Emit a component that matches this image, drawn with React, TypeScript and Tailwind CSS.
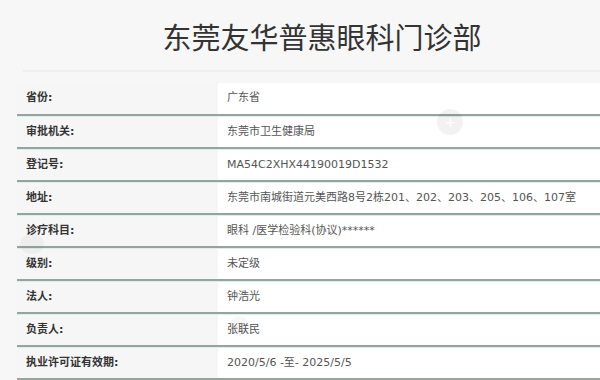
import React from "react";

const rows: [string, string][] = [
  ["省份:", "广东省"],
  ["审批机关:", "东莞市卫生健康局"],
  ["登记号:", "MA54C2XHX44190019D1532"],
  ["地址:", "东莞市南城街道元美西路8号2栋201、202、203、205、106、107室"],
  ["诊疗科目:", "眼科 /医学检验科(协议)******"],
  ["级别:", "未定级"],
  ["法人:", "钟浩光"],
  ["负责人:", "张联民"],
  ["执业许可证有效期:", "2020/5/6 -至- 2025/5/5"],
];

const font = {
  fontFamily: '"DejaVu Sans", "Noto Sans CJK SC", sans-serif',
};

export default function App() {
  return (
    <div
      className="relative w-[600px] h-[380px] overflow-hidden bg-[#f7f7f7]"
      style={font}
    >
      <div className="ml-[17px] w-[610px]">
        <h1
          className="h-[70px] pt-[14px] text-center text-[29px] leading-[44px] text-[#333] pl-[0px]"
          style={{ fontFamily: '"Noto Sans CJK SC", sans-serif' }}
        >
          东莞友华普惠眼科门诊部
        </h1>
        <div className="ml-[6px] h-[2px] bg-[#efefef]" />
        <div className="h-[11px]" />
        <div className="flex flex-col">
          {rows.map(([k, v], i) => (
            <div
              key={i}
              className={`flex h-[33px] border-b-2 border-[#93a69e] ${
                i === 0 ? "" : "border-t border-t-[#ddefe8]"
              }`}
            >
              <div className="w-[201px] flex items-center pl-[9px] bg-[#f6f6f6] text-[11px] font-semibold text-[#333]">
                {k}
              </div>
              <div className="flex-1 flex items-center pl-[9px] bg-white text-[11px] text-[#555]">
                {v}
              </div>
            </div>
          ))}
        </div>
      </div>
      <div className="absolute left-[437px] top-[109px] w-[26px] h-[26px] rounded-full bg-[#000]/[0.05] flex items-center justify-center text-white text-[14px] leading-none">
        +
      </div>
      <div className="absolute left-[20px] top-[234px] w-[24px] h-[20px] rounded-full bg-[#000]/[0.03]" />
      <div className="absolute left-[229px] top-[316px] w-[20px] h-[20px] rounded-full bg-[#000]/[0.03]" />
    </div>
  );
}
